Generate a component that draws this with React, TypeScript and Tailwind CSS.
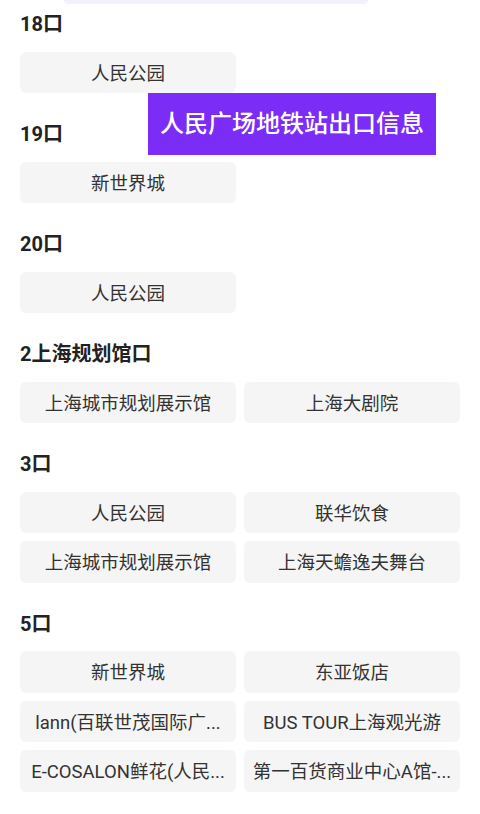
import React from 'react';

const sections: { title: string; exits: string[] }[] = [
  { title: '18口', exits: ['人民公园'] },
  { title: '19口', exits: ['新世界城'] },
  { title: '20口', exits: ['人民公园'] },
  { title: '2上海规划馆口', exits: ['上海城市规划展示馆', '上海大剧院'] },
  { title: '3口', exits: ['人民公园', '联华饮食', '上海城市规划展示馆', '上海天蟾逸夫舞台'] },
  {
    title: '5口',
    exits: [
      '新世界城',
      '东亚饭店',
      'lann(百联世茂国际广...',
      'BUS TOUR上海观光游',
      'E-COSALON鲜花(人民...',
      '第一百货商业中心A馆-...',
    ],
  },
];

export default function App() {
  return (
    <div
      className="relative w-[480px] h-[814px] overflow-hidden bg-white"
      style={{ fontFamily: 'Roboto, "Noto Sans CJK SC", sans-serif' }}
    >
      {/* search box bottom edge, scrolled away */}
      <div className="ml-[64px] w-[304px] h-[4px] rounded-b-[12px] bg-[#f3f1fb]" />

      <div className="px-5">
        {sections.map((s, i) => (
          <div key={s.title} className={i === 0 ? 'pt-[6px]' : 'pt-[27px]'}>
            <h2 className="h-7 leading-7 text-[20px] font-bold text-[#222] mb-[13.5px]">{s.title}</h2>
            <div className="grid grid-cols-2 gap-x-2 gap-y-2">
              {s.exits.map((e, j) => (
                <div
                  key={j}
                  className="h-[41.5px] rounded-md bg-[#f5f5f5] flex items-center justify-center px-2 pt-[5px] text-[18.5px] text-[#333] whitespace-nowrap overflow-hidden"
                >
                  {e}
                </div>
              ))}
            </div>
          </div>
        ))}
      </div>

      {/* toast */}
      <div className="absolute left-[148px] top-[93px] w-[288px] h-[62px] bg-[#7b2cf7] flex items-center justify-center text-white text-[24px] font-medium">
        人民广场地铁站出口信息
      </div>
    </div>
  );
}
